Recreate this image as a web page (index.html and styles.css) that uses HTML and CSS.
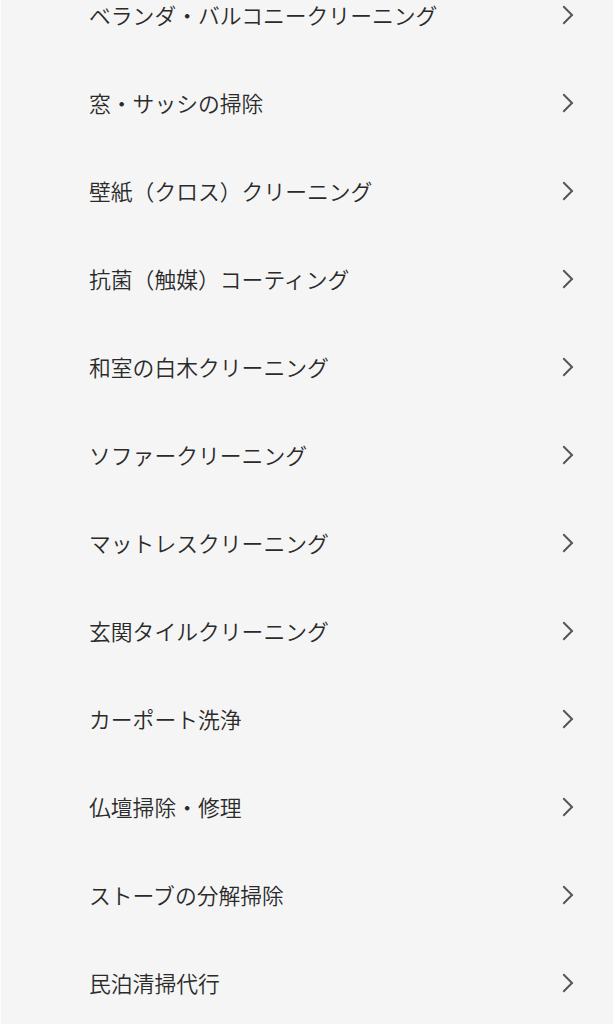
FILE: index.html
```html
<!DOCTYPE html>
<html lang="ja">
<head>
<meta charset="utf-8">
<link rel="stylesheet" href="styles.css">
</head>
<body>
<ul class="menu">
  <li class="item"><span class="label">ベランダ・バルコニークリーニング</span><svg class="chev" viewBox="0 0 12 20"><path d="M2 2l8 8-8 8"/></svg></li>
  <li class="item"><span class="label">窓・サッシの掃除</span><svg class="chev" viewBox="0 0 12 20"><path d="M2 2l8 8-8 8"/></svg></li>
  <li class="item"><span class="label">壁紙（クロス）クリーニング</span><svg class="chev" viewBox="0 0 12 20"><path d="M2 2l8 8-8 8"/></svg></li>
  <li class="item"><span class="label">抗菌（触媒）コーティング</span><svg class="chev" viewBox="0 0 12 20"><path d="M2 2l8 8-8 8"/></svg></li>
  <li class="item"><span class="label">和室の白木クリーニング</span><svg class="chev" viewBox="0 0 12 20"><path d="M2 2l8 8-8 8"/></svg></li>
  <li class="item"><span class="label">ソファークリーニング</span><svg class="chev" viewBox="0 0 12 20"><path d="M2 2l8 8-8 8"/></svg></li>
  <li class="item"><span class="label">マットレスクリーニング</span><svg class="chev" viewBox="0 0 12 20"><path d="M2 2l8 8-8 8"/></svg></li>
  <li class="item"><span class="label">玄関タイルクリーニング</span><svg class="chev" viewBox="0 0 12 20"><path d="M2 2l8 8-8 8"/></svg></li>
  <li class="item"><span class="label">カーポート洗浄</span><svg class="chev" viewBox="0 0 12 20"><path d="M2 2l8 8-8 8"/></svg></li>
  <li class="item"><span class="label">仏壇掃除・修理</span><svg class="chev" viewBox="0 0 12 20"><path d="M2 2l8 8-8 8"/></svg></li>
  <li class="item"><span class="label">ストーブの分解掃除</span><svg class="chev" viewBox="0 0 12 20"><path d="M2 2l8 8-8 8"/></svg></li>
  <li class="item"><span class="label">民泊清掃代行</span><svg class="chev" viewBox="0 0 12 20"><path d="M2 2l8 8-8 8"/></svg></li>
</ul>
</body>
</html>
```
FILE: styles.css
```css
html, body {
  margin: 0;
  padding: 0;
  background: #f5f5f5;
}
body {
  font-family: "Noto Sans CJK JP", "Noto Sans", sans-serif;
  color: #2a2a2a;
  overflow: hidden;
}
.menu {
  list-style: none;
  margin: -29px 0 0 0;
  padding: 0 39px 0 88px;
  border-left: 1px solid #fbfbfb;
  border-right: 2px solid #fdfdfd;
}
.item {
  height: 88px;
  display: flex;
  align-items: center;
  justify-content: space-between;
}
.label {
  font-size: 21.8px;
  font-weight: 350;
  line-height: 1;
  white-space: nowrap;
}
.chev {
  width: 12px;
  height: 20px;
  fill: none;
  stroke: #555;
  stroke-width: 2;
  stroke-linecap: square;
}
```
